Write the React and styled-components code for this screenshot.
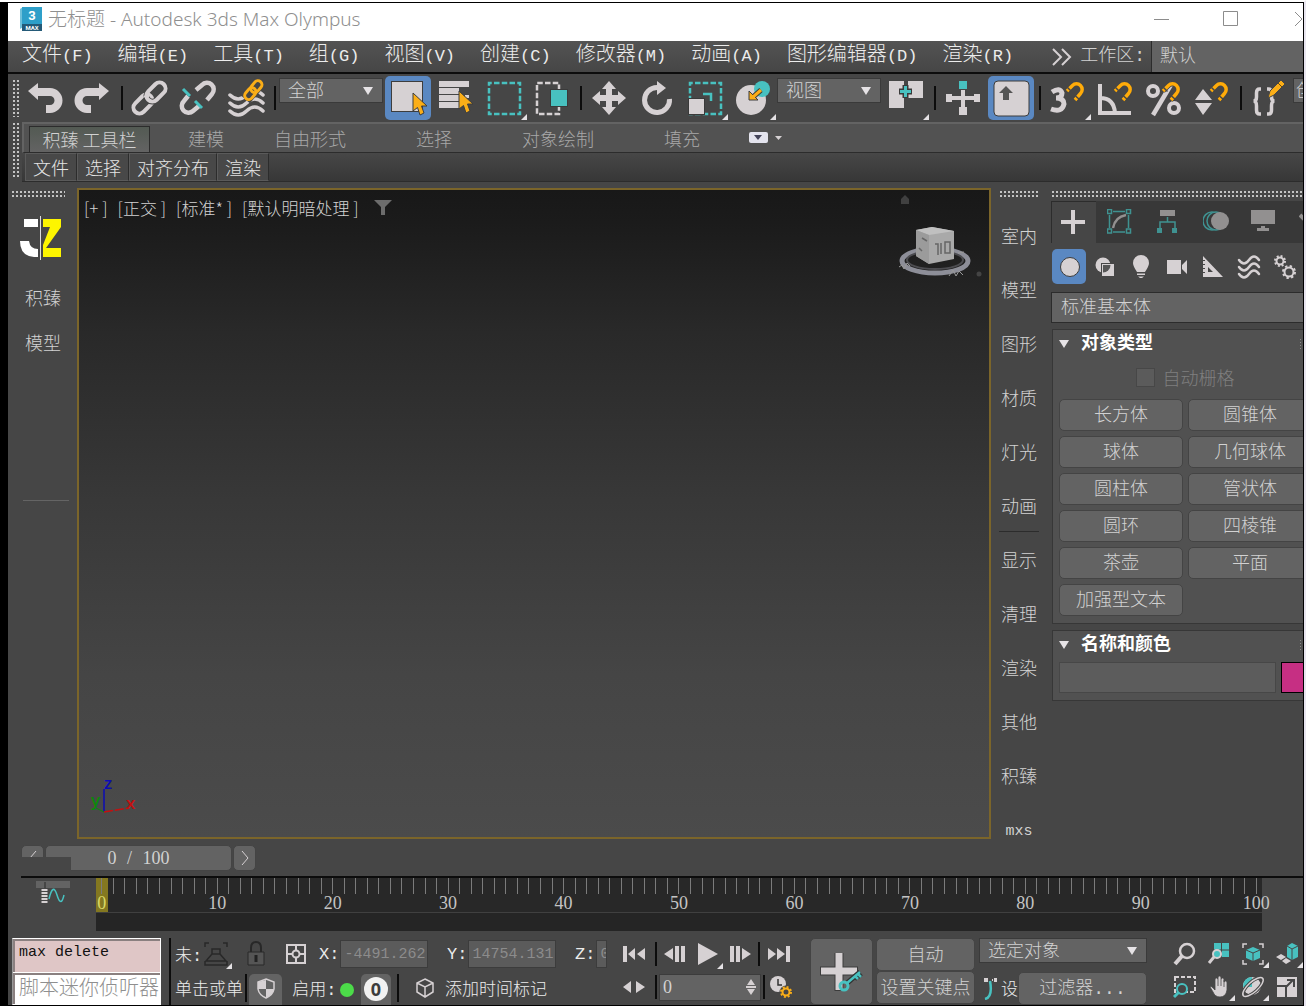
import React from "react";
import styled, { createGlobalStyle, css } from "styled-components";

const C = {
  base: "#464646",
  light: "#636363",
  panel: "#515151",
  dark: "#383838",
  line: "#2c2c2c",
  icon: "#d6d1d3",
  teal: "#48c1c0",
  gold: "#fbae17",
  blue: "#5a88c2",
  text: "#d2d2d2",
};
const song = '"Liberation Mono", "Noto Sans CJK SC", monospace';
const hei = '"Noto Sans CJK SC", "Noto Sans", sans-serif';
const digits = '"Liberation Serif", "Noto Sans CJK SC", serif';

const Global = createGlobalStyle`
  * { box-sizing: border-box; }
  body { margin: 0; background: #000; font-family: ${song}; font-weight: 300; }
  button, input, select { font: inherit; color: inherit; border: 0; margin: 0; padding: 0; background: none; border-radius: 0; }
  button { white-space: nowrap; }
  svg { display: block; flex: none; }
`;

/* ---------- frame ---------- */
const Frame = styled.div`
  display: flex;
  flex-direction: column;
  height: 100vh;
  min-height: 900px;
  overflow: hidden;
  padding-left: 8px;
  border-top: 2px solid #fff;
  border-right: 2px solid #e9e6f0;
  background: #000;
`;
const Window = styled.div`
  flex: 1;
  min-height: 0;
  display: flex;
  flex-direction: column;
  border: solid #000;
  border-width: 1px 1px 1px 0;
  background: ${C.base};
  color: ${C.text};
  overflow: hidden;
`;
const TitleBar = styled.header`
  flex: none;
  height: 38px;
  display: flex;
  align-items: center;
  padding: 0 0 7px 12px;
  gap: 6px;
  background: #fff;
  color: #8f8f8f;
  overflow: hidden;
`;
const Title = styled.h1`
  flex: 1;
  margin: 0;
  font: 300 19px/24px "Noto Sans", "Noto Sans CJK SC", sans-serif;
  white-space: nowrap;
`;
const WindowButtons = styled.div`
  flex: none;
  display: flex;
  margin-right: -31px;
`;
const WindowButton = styled.button`
  width: 69px;
  height: 30px;
  display: grid;
  place-items: center;
`;

/* ---------- menu ---------- */
const MenuBar = styled.nav`
  flex: none;
  height: 33px;
  display: flex;
  padding-left: 14px;
  background: linear-gradient(#535353, #464646);
  border-bottom: 2px solid #0c0c0c;
  overflow: hidden;
`;
const MenuList = styled.div`
  display: flex;
  gap: 25px;
`;
const MenuItem = styled.button`
  font-size: 20px;
  line-height: 26px;
  color: #ececec;
`;
const Latin = styled.span`
  font-size: 17px;
`;
const Workspace = styled.label`
  flex: 1;
  display: flex;
  align-items: center;
  justify-content: flex-end;
  font-size: 18px;
  line-height: 24px;
  white-space: nowrap;
  gap: 6px;
  & > span { padding: 0 0 2px 2px; }
`;
const WorkspaceSelect = styled.select`
  width: 152px;
  align-self: stretch;
  padding-left: 8px;
  background: ${C.light};
  border-left: 1px solid ${C.line};
  font-size: 18px;
  appearance: none;
`;

/* ---------- toolbar ---------- */
const ToolbarRow = styled.div`
  flex: none;
  height: 48px;
  display: flex;
  align-items: center;
  overflow: hidden;
  & > * { flex: none; }
`;
const dots = css`
  background-image: radial-gradient(circle, #c4c4c4 1px, transparent 1px);
  background-size: 4px 4px;
`;
const VGrip = styled.i`
  display: block;
  width: 8px;
  margin: 0 ${(p) => p.$after}px 0 4px;
  height: ${(p) => p.$h}px;
  ${dots}
`;
const HGrip = styled.i`
  display: block;
  height: 8px;
  ${dots}
`;
const ToolButton = styled.button`
  position: relative;
  width: 48px;
  height: 48px;
  display: grid;
  place-items: center;
  ${(p) =>
    p.$on &&
    css`
      &::before {
        content: "";
        position: absolute;
        inset: 2px 1px;
        border-radius: 5px;
        background: ${C.blue};
      }
    `}
  svg { position: relative; }
`;
const Fly = styled.i`
  position: absolute;
  right: ${(p) => p.$r || 1}px;
  bottom: ${(p) => p.$b || 2}px;
  border: solid transparent;
  border-width: 0 0 6px 6px;
  width: 0;
  height: 0;
  border-bottom-color: #e4e1e4;
`;
const Sep = styled.i`
  display: block;
  width: ${(p) => p.$w || 9}px;
  height: ${(p) => p.$h || 24}px;
  background: linear-gradient(#0c0c0c, #0c0c0c) center / 2px 100% no-repeat;
`;
const DropBox = styled.span`
  position: relative;
  display: block;
  width: ${(p) => p.$w}px;
  height: 25px;
  background: ${C.light};
  border: 1px solid #3a3a3a;
  align-self: flex-start;
  margin: ${(p) => (p.$bar ? "4px 1px 0 0" : "0")};
  svg {
    position: absolute;
    right: 9px;
    top: 8px;
    pointer-events: none;
  }
`;
const Drop = styled.select`
  width: 100%;
  height: 100%;
  padding: 2px 0 0 ${(p) => p.$inset}px;
  font-size: 18px;
  line-height: 22px;
  appearance: none;
`;

/* ---------- ribbon ---------- */
const Ribbon = styled.section`
  flex: none;
  display: flex;
  font-family: ${hei};
  font-size: 18px;
  overflow: hidden;
`;
const RibbonBody = styled.div`
  flex: 1;
  min-width: 0;
`;
const RibbonTabs = styled.div`
  height: 31px;
  display: flex;
  align-items: flex-end;
  padding-left: 5px;
  background: #525252;
  border-top: 2px solid ${C.light};
  border-bottom: 1px solid ${C.line};
  border-left: 2px solid ${C.light};
`;
const RibbonTab = styled.button`
  flex: none;
  width: ${(p) => p.$w}px;
  height: 28px;
  line-height: 24px;
  color: #a8a8a8;
  ${(p) =>
    p.$on &&
    css`
      height: 26px;
      margin-right: 14px;
      padding-bottom: 3px;
      color: ${C.text};
      background: linear-gradient(#535a53, #636363);
      border: 1px solid ${C.line};
      border-bottom: 0;
    `}
`;
const RibbonMore = styled.button`
  height: 28px;
  padding: 0 4px;
`;
const RibbonPanels = styled.div`
  height: 29px;
  display: flex;
  padding-left: 3px;
  background: linear-gradient(#474747, #373737);
  border-bottom: 1px solid ${C.line};
`;
const RibbonPanel = styled.button`
  padding: 0 7px;
  line-height: 27px;
  color: #e4e4e4;
  background: #484848;
  border: 1px solid #5a5a5a;
  border-right-color: ${C.line};
`;

/* ---------- work area ---------- */
const Work = styled.main`
  flex: 1;
  min-height: 0;
  display: flex;
  padding-top: 6px;
`;
const LeftDock = styled.aside`
  flex: none;
  width: 69px;
  padding: 2px 12px 0 3px;
  display: flex;
  flex-direction: column;
  align-items: stretch;
`;
const Logo = styled.div`
  height: 80px;
  display: grid;
  place-items: center;
  padding: 0 0 0 6px;
`;
const DockButton = styled.button`
  height: 45px;
  padding-left: 10px;
  font-size: 18px;
  line-height: 45px;
`;
const DockRule = styled.hr`
  width: 46px;
  margin: 132px 0 0 12px;
  border: 0;
  border-top: 1px solid #646464;
`;
const Viewport = styled.section`
  position: relative;
  flex: 1;
  min-width: 0;
  margin-bottom: 2px;
  border: 2px solid #7b652a;
  background: linear-gradient(#181818, #1b1b1b 5%, #292929 22%, #383838 48%, #454545 75%, #4b4b4b);
  overflow: hidden;
`;
const ViewLabels = styled.div`
  display: flex;
  align-items: center;
  gap: 10px;
  padding: 5px;
  font-family: ${hei};
  font-size: 17px;
  line-height: 26px;
`;
const Cube = styled.div`
  position: absolute;
  right: -2px;
  top: 2px;
`;
const Axis = styled.div`
  position: absolute;
  left: 8px;
  bottom: 18px;
`;
const SideDock = styled.aside`
  flex: none;
  width: 59px;
  padding: 2px 0 0 8px;
  overflow: hidden;
`;
const SideGrip = styled(HGrip)`
  width: 40px;
  margin-bottom: 10px;
`;
const SideButton = styled.button`
  display: block;
  width: 40px;
  height: 54px;
  padding-top: ${(p) => (p.$latin ? 6 : 0)}px;
  font-size: ${(p) => (p.$latin ? 15 : 18)}px;
  border-bottom: 1px solid ${(p) => (p.$rule ? C.line : "transparent")};
`;

/* ---------- command panel ---------- */
const Command = styled.aside`
  flex: none;
  width: 253px;
  padding: 2px 0 0 1px;
  overflow: hidden;
`;
const CommandTabs = styled.div`
  display: flex;
  height: 42px;
  margin-top: 3px;
  background: ${C.dark};
  button { flex: none; width: 48px; display: grid; place-items: center; }
  button:first-child { width: 45px; background: ${C.base}; border: solid ${C.line}; border-width: 1px 0 0 1px; }
`;
const Categories = styled.div`
  display: flex;
  gap: 2px;
  padding: 6px 0 8px 1px;
`;
const Category = styled.button`
  flex: none;
  width: 34px;
  height: 35px;
  display: grid;
  place-items: center;
  border-radius: 5px;
  background: ${(p) => (p.$on ? C.blue : "none")};
`;
const KindSelect = styled.select`
  display: block;
  width: 100%;
  height: 31px;
  padding-left: 9px;
  background: ${C.light};
  border: 1px solid ${C.line};
  border-right: 0;
  font-size: 18px;
  appearance: none;
`;
const Rollout = styled.section`
  margin: 6px 0 6px 1px;
  background: ${C.panel};
  border: 1px solid #373737;
  border-right: 0;
  padding: 0 0 7px 6px;
`;
const RolloutTitle = styled.h2`
  display: flex;
  align-items: center;
  gap: 12px;
  height: 27px;
  padding-top: 1px;
  margin: 0;
  font-size: 18px;
  line-height: 22px;
  font-weight: 700;
  color: #fff;
  i { width: 4px; height: 12px; margin-left: auto; ${dots} background-size: 3px 3px; opacity: 0.5; }
`;
const AutoGrid = styled.label`
  display: flex;
  align-items: center;
  justify-content: center;
  gap: 8px;
  height: 42px;
  padding-bottom: 2px;
  padding-left: 8px;
  font-size: 18px;
  color: #7f7f7f;
  input { appearance: none; width: 19px; height: 19px; background: #5b5b5b; border: 1px solid #474747; }
`;
const ObjectGrid = styled.div`
  display: grid;
  grid-template-columns: 124px 124px;
  gap: 5px;
`;
const Raised = styled.button`
  height: 32px;
  border: 1px solid #444;
  border-radius: 5px;
  background: ${C.light};
  font-size: 18px;
  line-height: 28px;
  overflow: hidden;
`;
const ObjectButton = styled(Raised)`
  padding-top: 2px;
`;
const NameRow = styled.div`
  display: flex;
  gap: 5px;
  padding-top: 4px;
  input { flex: 1; min-width: 0; height: 31px; background: #5c5c5c; border: 1px solid #474747; }
  button { width: 22px; height: 31px; background: #c62f83; border: 1px solid #000; border-right: 0; }
`;

/* ---------- time ---------- */
const TimeSlider = styled.div`
  position: relative;
  flex: none;
  height: 35px;
  display: flex;
  gap: 1px;
  padding: 4px 0 0 13px;
`;
const SliderStep = styled(Raised)`
  width: 23px;
  height: 26px;
  display: grid;
  place-items: center;
`;
const SliderThumb = styled(Raised)`
  width: 187px;
  height: 26px;
  font-family: ${digits};
  line-height: 22px;
`;
const Slash = styled.span`
  padding: 0 6px;
`;
const SliderMask = styled.i`
  position: absolute;
  left: 13px;
  top: 16px;
  width: 50px;
  height: 14px;
  background: ${C.base};
`;
const Track = styled.div`
  flex: none;
  height: 55px;
  display: flex;
  margin-left: 13px;
  padding-right: 41px;
  border-top: 2px solid #0c0c0c;
`;
const CurveButton = styled.button`
  flex: none;
  width: 75px;
  display: flex;
  padding: 2px 0 0 14px;
`;
const Ruler = styled.div`
  flex: 1;
  display: grid;
  grid-template-columns: repeat(101, minmax(0, 1fr));
  height: 53px;
  background: linear-gradient(#282828 34px, #404040 34px, #404040 35px, #252525 35px);
`;
const Tick = styled.div`
  display: flex;
  flex-direction: column;
  align-items: center;
  height: 34px;
  font: 18px/18px ${digits};
  color: ${(p) => (p.$now ? "#d9d968" : "#c4c4c4")};
  background: ${(p) => (p.$now ? "#847820" : "none")};
  &::before { content: ""; flex: none; width: 1px; height: 16px; background: #7c7c7c; }
`;

/* ---------- status ---------- */
const Status = styled.footer`
  flex: none;
  height: 74px;
  display: flex;
  padding: 7px 0 0 4px;
  overflow: hidden;
  & > * { flex: none; }
`;
const Listener = styled.div`
  width: 149px;
  display: grid;
  grid-template-rows: 33px 34px;
  gap: 1px;
  border: 1px solid #fff;
  border-left-color: #999;
  background: #fff;
  overflow: hidden;
  input {
    min-width: 0;
    padding: 0 0 9px 4px;
    background: #fff;
    border: 2px solid #8a8080;
    border-right-width: 0;
    border-bottom-width: 0;
    color: #8f8f8f;
    font-size: 20px;
  }
  input:first-child { background: #dfc6c6; color: #111; font-size: 15px; }
`;
const Stack = styled.div`
  display: flex;
  flex-direction: column;
  width: ${(p) => p.$w}px;
  margin-left: ${(p) => p.$ml || 0}px;
  ${(p) => p.$rule && "border-left: 2px solid #0c0c0c;"}
`;
const Line = styled.div`
  display: flex;
  align-items: center;
  height: ${(p) => p.$h || 34}px;
  padding-left: ${(p) => p.$pl || 0}px;
  & > * { flex: none; }
`;
const Clip = styled.span`
  width: ${(p) => p.$w}px;
  padding-top: 6px;
  overflow: hidden;
  white-space: nowrap;
  font-size: 17px;
  line-height: 26px;
  color: #ececec;
`;
const IconButton = styled.button`
  position: relative;
  width: ${(p) => p.$w}px;
  height: ${(p) => p.$h || 32}px;
  display: grid;
  place-items: center;
  ${(p) => p.$raised && `background: ${C.light}; border-radius: 5px 5px 0 0; margin-top: 3px;`}
`;
const Coord = styled.label`
  display: flex;
  align-items: center;
  width: 128px;
  padding-left: 10px;
  font-size: 17px;
  color: #ececec;
  input {
    width: ${(p) => p.$w}px;
    height: 28px;
    margin-left: 1px;
    padding-left: 3px;
    background: #5b5b5b;
    border: 1px solid #3c3c3c;
    font-size: 15px;
    color: #8c8c8c;
  }
`;
const Lamp = styled.i`
  width: 14px;
  height: 14px;
  margin: 4px 7px 0 4px;
  border-radius: 50%;
  background: #4cdb49;
`;
const Badge = styled.b`
  width: 24px;
  height: 24px;
  border-radius: 50%;
  background: #f1f1f1;
  color: #3c3c3c;
  font: 700 18px/24px "Open Sans", sans-serif;
`;
const FrameField = styled.span`
  display: flex;
  align-items: center;
  width: 102px;
  height: 27px;
  padding-right: 4px;
  background: ${C.light};
  border: 1px solid #3c3c3c;
  input { flex: 1; min-width: 0; padding-left: 3px; font: 18px ${digits}; }
`;
const BigKey = styled(Raised)`
  width: 63px;
  height: 70px;
  display: grid;
  place-items: center;
`;
const KeyButton = styled(Raised)`
  width: 99px;
  height: 33px;
  padding-top: 2px;
`;
const FilterButton = styled(Raised)`
  width: 129px;
  height: 33px;
  padding-top: 2px;
`;
const Nav = styled.div`
  display: grid;
  grid-template-columns: repeat(4, 34px);
  grid-auto-rows: 33px;
  margin-left: 22px;
`;

/* ---------- icons ---------- */
const Svg = ({ w = 48, h = w, children }) => (
  <svg width={w} height={h} viewBox={`0 0 ${w} ${h}`} fill="none" stroke="none" aria-hidden="true">
    {children}
  </svg>
);
const Down = ({ w = 10, h = 8, c = "#e6e3e6" }) => (
  <Svg w={w} h={h}><path d={`M0 0H${w}L${w / 2} ${h}Z`} fill={c} /></Svg>
);
const Magnet = () => (
  <g>
    <path d="M23 17L28 12a6 6 0 0 1 9 8L31 26" stroke={C.base} strokeWidth="5" />
    <path d="M23 17L28.500 11.500a5.500 5.500 0 0 1 8 8L31 26" stroke="#ffab09" strokeWidth="3.500" />
    <path d="M23.500 13.500l4 4M31.500 22l4 3.500" stroke={C.base} strokeWidth="1.500" />
  </g>
);
const Undo = () => (
  <>
    <path d="M15 18H29a8.500 8.500 0 0 1 0 17H25" stroke={C.icon} strokeWidth="8" />
    <path d="M7 17L17 9V26Z" fill={C.icon} />
  </>
);
const waves = (x, y, w, g) =>
  [0, 1, 2].map((i) => (
    <path key={i} d={`M${x} ${y + i * g}q${w / 4} ${g} ${w / 2} 0t${w / 2} 0`} stroke={C.icon} strokeWidth={w > 25 ? 3.5 : 2.5} strokeLinecap="round" />
  ));
const DashRect = ({ c = C.teal, x, y, w, h }) => (
  <rect x={x} y={y} width={w} height={h} stroke={c} strokeWidth="2.500" strokeDasharray="5.500 2.250" strokeDashoffset="2.750" />
);
const Pointer = ({ x, y }) => (
  <path transform={`translate(${x} ${y})`} d="M0 0V18L4.500 14.500L7 22L11 20L8.500 13H14Z" fill={C.gold} stroke="#3d3d3d" />
);

const art = {
  undo: <Undo />,
  redo: <g transform="translate(47 0) scale(-1 1)"><Undo /></g>,
  link: (
    <g stroke={C.icon} strokeWidth="4">
      <rect x="-11" y="-6" width="22" height="12" rx="6" transform="translate(17 30) rotate(-45)" />
      <rect x="-11" y="-6" width="22" height="12" rx="6" transform="translate(30 18) rotate(-45)" stroke={C.base} strokeWidth="6" />
      <rect x="-11" y="-6" width="22" height="12" rx="6" transform="translate(30 18) rotate(-45)" />
      <path d="M19 24L24 19" />
    </g>
  ),
  unlink: (
    <>
      <path d="M22 16L28 11a6.500 6.500 0 0 1 10 9L33 26M14 22L10 27a6.500 6.500 0 0 0 9 10L25 32" stroke={C.icon} strokeWidth="4.500" />
      <path d="M9 15L16 22M21 27L28 34" stroke={C.teal} strokeWidth="3" />
    </>
  ),
  warp: (
    <>
      {waves(8, 21, 33, 8)}
      <path d="M23 25L38 8" stroke={C.base} strokeWidth="13" />
      <g stroke={C.gold} strokeWidth="3">
        <rect x="-6" y="-4" width="13" height="8" rx="4" transform="translate(34 13) rotate(-50)" />
        <rect x="-6" y="-4" width="13" height="8" rx="4" transform="translate(28 20) rotate(-50)" />
      </g>
    </>
  ),
  select: (
    <>
      <rect x="7.500" y="7.500" width="31" height="30" fill={C.icon} stroke="#3d3d3d" />
      <Pointer x={29} y={19} />
    </>
  ),
  list: (
    <>
      <path d="M7 7H37V13H7ZM7 14H27V20H7ZM7 21H27V27H7ZM33 21H37V24H33ZM7 28H27V34H7Z" fill={C.icon} />
      <Pointer x={27} y={17} />
    </>
  ),
  rect: <DashRect x={9} y={9} w={31} h={31} />,
  window: (
    <>
      <path d="M31 16V9H9V40H31V32" stroke={C.icon} strokeWidth="2.500" strokeDasharray="5.500 2.250" />
      <rect x="22.500" y="15.500" width="17" height="17" fill={C.teal} stroke="#3a3a3a" />
    </>
  ),
  move: <path d="M24 7L31 15H27V21H33V17L41 24L33 31V27H27V33H31L24 41L17 33H21V27H15V31L7 24L15 17V21H21V15H17Z" fill={C.icon} />,
  rotate: (
    <>
      <path d="M36.500 25a12.500 12.500 0 1 1-12.500-11.500" stroke={C.icon} strokeWidth="5" />
      <path d="M24 7L33 14L24 21Z" fill={C.icon} />
    </>
  ),
  scale: (
    <>
      <DashRect x={9} y={9} w={31} h={31} />
      <path d="M22 20H30V27" stroke={C.teal} strokeWidth="2.500" />
      <rect x="7.500" y="24.500" width="16" height="16" fill={C.icon} stroke="#3a3a3a" />
    </>
  ),
  place: (
    <>
      <circle cx="22" cy="26" r="15" fill={C.icon} />
      <circle cx="33" cy="15" r="8" fill={C.teal} />
      <path d="M32 16L24 23" stroke="#3d3d3d" strokeWidth="5" />
      <path d="M20 26V17L29 26Z" fill={C.gold} stroke="#3d3d3d" />
      <path d="M32 16L24 23" stroke={C.gold} strokeWidth="3" />
    </>
  ),
  pivot: (
    <>
      <path d="M7 7H22V34H7ZM26 7H41V24H26Z" fill={C.icon} />
      <path d="M17 17.500H30M23.500 11V24" stroke="#3a3a3a" strokeWidth="6" />
      <path d="M18 17.500H29M23.500 12V23" stroke={C.teal} strokeWidth="3" />
    </>
  ),
  manip: (
    <>
      <path d="M24 16V36M12 24H36" stroke={C.icon} strokeWidth="4" />
      <path d="M7 20H13V28H7ZM35 20H41V28H35ZM20 33H28V41H20Z" fill={C.icon} />
      <rect x="20" y="7" width="8" height="8" fill={C.teal} />
    </>
  ),
  keys: (
    <>
      <rect x="7" y="7" width="35" height="35" rx="4" fill={C.icon} stroke="#3d3d3d" />
      <path d="M19 12L26 19H22V26H16V19H12Z" fill="#555" />
    </>
  ),
  snap: (
    <>
      <path d="M8 18q8-5 10 1q0 5-6 5q8 0 8 6q-2 9-13 5" stroke={C.icon} strokeWidth="5" />
      <Magnet />
    </>
  ),
  angle: (
    <>
      <path d="M8 10V39H39M8 24q14 0 15 15" stroke={C.icon} strokeWidth="4" />
      <Magnet />
    </>
  ),
  percent: (
    <>
      <circle cx="13" cy="17" r="5" stroke={C.icon} strokeWidth="4" />
      <circle cx="34" cy="34" r="5" stroke={C.icon} strokeWidth="4" />
      <path d="M32 9L13 41" stroke={C.icon} strokeWidth="4.500" />
      <Magnet />
    </>
  ),
  spin: (
    <>
      <path d="M7 26L15 15L24 26ZM7 29H24L15 41Z" fill={C.icon} />
      <Magnet />
    </>
  ),
  script: (
    <>
      <path d="M16 15h-1.500q-3 0-3 4v4q0 4-3 4q3 0 3 5v4q0 4 3 4H16M22 15h1.500q3 0 3 4v4q0 4 3 4q-3 0-3 5v4q0 4-3 4H22" stroke={C.icon} strokeWidth="3.500" />
      <path d="M23 24L25 17L36 6L40 10L29 21Z" fill={C.gold} stroke={C.base} />
      <path d="M33 9L37 13" stroke="#6a4a10" />
    </>
  ),
};
const Tool = ({ icon, label, on, fly }) => (
  <ToolButton type="button" aria-label={label} $on={on}>
    <Svg>{art[icon]}</Svg>
    {fly && <Fly />}
  </ToolButton>
);

const SelectBox = ({ label, value, w, bar, inset = 8 }) => (
  <DropBox $w={w} $bar={bar}>
    <Drop aria-label={label} defaultValue={value} $inset={inset}><option>{value}</option></Drop>
    <Down />
  </DropBox>
);

const menus = [["文件", "F"], ["编辑", "E"], ["工具", "T"], ["组", "G"], ["视图", "V"], ["创建", "C"], ["修改器", "M"], ["动画", "A"], ["图形编辑器", "D"], ["渲染", "R"]];
const sides = ["室内", "模型", "图形", "材质", "灯光", "动画", "显示", "清理", "渲染", "其他", "积臻", "mxs"];
const objects = ["长方体", "圆锥体", "球体", "几何球体", "圆柱体", "管状体", "圆环", "四棱锥", "茶壶", "平面", "加强型文本"];

const commandTabs = [
  ["创建", <path key="a" d="M12 0V24M0 12H24" stroke={C.icon} strokeWidth="4" />],
  ["修改", <g key="b" strokeWidth="1.500"><path d="M6 2.500H18M6 23H18M2.500 6V19M21.500 6V19M0.500 0.500h4v4h-4zM19.500 0.500h4v4h-4zM0.500 20h4v4h-4zM19.500 20h4v4h-4z" stroke="#3f9291" /><path d="M6 19Q8 8 19 6" stroke="#929090" strokeWidth="2.500" /></g>],
  ["层次", <g key="c"><path d="M5 1H20V7H5Z" fill="#929090" /><path d="M12.500 8V13M5 19V13H20V19" stroke="#3f9291" strokeWidth="1.500" /><path d="M2 19H7V24H2ZM17 19H22V24H17Z" fill="#3f9291" /></g>],
  ["运动", <g key="d"><circle cx="9" cy="12" r="9" stroke="#3f9291" strokeWidth="1.500" /><circle cx="13" cy="12" r="9" stroke="#3f9291" strokeWidth="1.500" fill={C.dark} /><circle cx="17" cy="12" r="9" fill="#929090" /></g>],
  ["显示", <path key="e" d="M0 1H24V15H0ZM10 17H14V19H18V22H6V19H10Z" fill="#929090" />],
  ["实用程序", <path key="f" d="M1 6L11 16L13 14" stroke="#929090" strokeWidth="4" />],
];
const gear = (x, y, r, c) => (
  <g stroke={c}>
    <circle cx={x} cy={y} r={r} strokeWidth="2" />
    <circle cx={x} cy={y} r={r + 1.5} strokeWidth="2" strokeDasharray={`${(r + 1.5) * 0.39} ${(r + 1.5) * 0.395}`} />
  </g>
);
const categories = [
  ["几何体", <circle key="a" cx="13" cy="12" r="9.500" fill={C.icon} stroke="#3d3d3d" />],
  ["图形", <g key="b"><circle cx="10" cy="10" r="7.500" fill={C.icon} /><rect x="8.500" y="8.500" width="13" height="13" fill={C.icon} stroke="#464646" /><path d="M10 10H17.500A7.500 7.500 0 0 1 10 17.500Z" fill="#565656" /></g>],
  ["灯光", <path key="c" d="M12 0a8 8 0 0 1 8 8q0 3-4 9H8Q4 11 4 8a8 8 0 0 1 8-8ZM8 18.500H16V20H8ZM9 21.500H15L13 23H11Z" fill={C.icon} />],
  ["摄影机", <path key="d" d="M2 5H16V19H2ZM17 10L22 5V19L17 14Z" fill={C.icon} />],
  ["辅助对象", <path key="e" fillRule="evenodd" d="M2 1L22 22H2ZM7 12V17H12ZM2 5H4V6H2ZM2 9H4V10H2ZM2 13H4V14H2ZM2 17H4V18H2Z" fill={C.icon} />],
  ["空间扭曲", <g key="f">{waves(2, 5, 20, 7)}</g>],
  ["系统", <g key="g">{gear(7, 6, 3.5, C.icon)}{gear(16, 17, 4.5, C.icon)}</g>],
];
const tri = (d, c = C.icon) => <path d={d} fill={c} />;
const navIcons = [
  ["缩放", <g key="a"><circle cx="14" cy="9" r="7" stroke={C.icon} strokeWidth="2.500" /><path d="M9 14L2 22" stroke={C.icon} strokeWidth="4" /></g>],
  ["缩放所有视图", <g key="b"><path d="M7 1H22V15H7Z" fill={C.teal} /><path d="M14.500 1V15M7 8H22" stroke={C.base} /><circle cx="10" cy="12" r="4" fill={C.teal} stroke={C.icon} strokeWidth="2" /><path d="M7 15L2 21" stroke={C.icon} strokeWidth="3" /></g>],
  ["最大化显示", <g key="c"><path d="M2 6V2H6M18 2H22V6M22 18V22H18M6 22H2V18" stroke={C.icon} strokeWidth="1.500" /><path d="M12 5L19 8V16L12 19L5 16V8Z" fill={C.teal} /><path d="M5 8L12 11L19 8M12 11V19" stroke={C.base} /></g>, 1],
  ["所有视图最大化", <g key="d"><path d="M12 4L17 1L23 4V15L17 18L12 15Z" fill={C.teal} /><path d="M12 4L17 7L23 4M17 7V18" stroke={C.base} /><path d="M1 15L6 12L11 15L6 18ZM7 19L11 16L16 19L11 22Z" fill={C.icon} /></g>, 1],
  ["缩放区域", <g key="e"><rect x="2" y="2" width="20" height="15" stroke={C.icon} strokeWidth="2" strokeDasharray="4 2" /><circle cx="9" cy="14" r="5" fill={C.base} stroke={C.teal} strokeWidth="2" /><path d="M6 17L1 22" stroke={C.teal} strokeWidth="3" /></g>],
  ["平移", <path key="f" d="M8 13V4q1.500-2 3 0V2q1.500-2 3 0V4q1.500-2 3 0V7q1.500-2 3 0V15q-1 7-7 7q-5 0-7-5L3 12q1-2 5 3ZM11 4V11M14 4V11M17 5V12" fill={C.icon} stroke={C.base} strokeWidth="0.800" />, 1],
  ["环绕", <g key="g"><circle cx="11" cy="11" r="9" fill={C.icon} /><path d="M11 12V2A9 9 0 0 0 2 12Z" fill={C.teal} /><ellipse cx="12" cy="12" rx="13" ry="5" transform="rotate(-42 12 12)" stroke={C.base} strokeWidth="3.500" /><ellipse cx="12" cy="12" rx="13" ry="5" transform="rotate(-42 12 12)" stroke={C.icon} strokeWidth="1.500" /></g>, 1],
  ["最大化视口", <g key="h"><path d="M2 2H22V22H2Z" fill={C.icon} /><path d="M2 11H11V22" stroke={C.base} strokeWidth="2" /><path d="M11 12L18 5M12 5H19V12" stroke={C.base} strokeWidth="2" /></g>],
];

export default function App() {
  return (
    <Frame>
      <Global />
      <Window>
        <TitleBar>
          <Svg w={22} h={24}>
            <path d="M0 2L3 0V20L0 22Z" fill="#6fc0da" />
            <path d="M2 0H22V17H2Z" fill="#2e9fc9" />
            <path d="M2 17H22V24H2Z" fill="#245a78" />
            <text x="12" y="13" fill="#fff" textAnchor="middle" fontFamily="Roboto, sans-serif" fontWeight="700" fontSize="13">3</text>
            <text x="12" y="23" fill="#fff" textAnchor="middle" fontFamily="Roboto, sans-serif" fontWeight="700" fontSize="6">MAX</text>
          </Svg>
          <Title>无标题 - Autodesk 3ds Max Olympus</Title>
          <WindowButtons>
            <WindowButton type="button" aria-label="最小化"><Svg w={16}><path d="M0 8.500H15" stroke="#8c8c8c" /></Svg></WindowButton>
            <WindowButton type="button" aria-label="最大化"><Svg w={16}><path d="M.5 .5H14.500V14.500H.5Z" stroke="#8c8c8c" /></Svg></WindowButton>
            <WindowButton type="button" aria-label="关闭"><Svg w={16}><path d="M3 1L10 8L3 15" stroke="#8c8c8c" /></Svg></WindowButton>
          </WindowButtons>
        </TitleBar>

        <MenuBar>
          <MenuList>
            {menus.map(([name, key]) => (
              <MenuItem type="button" key={name}>{name}<Latin>({key})</Latin></MenuItem>
            ))}
          </MenuList>
          <Workspace>
            <Svg w={20} h={18}><path d="M1 1L9 9L1 17M10 1L18 9L10 17" stroke={C.icon} strokeWidth="2" /></Svg>
            <span>工作区:</span>
            <WorkspaceSelect defaultValue="默认"><option>默认</option></WorkspaceSelect>
          </Workspace>
        </MenuBar>

        <ToolbarRow>
          <VGrip $h={38} $after={1} />
          <Tool icon="undo" label="撤消" />
          <Tool icon="redo" label="重做" />
          <Sep />
          <Tool icon="link" label="链接" />
          <Tool icon="unlink" label="取消链接" />
          <Tool icon="warp" label="绑定到空间扭曲" />
          <Sep />
          <SelectBox label="选择过滤器" value="全部" w={104} bar />
          <Tool icon="select" label="选择对象" on />
          <Tool icon="list" label="按名称选择" />
          <Tool icon="rect" label="矩形选择区域" fly />
          <Tool icon="window" label="窗口/交叉" />
          <Sep />
          <Tool icon="move" label="移动" />
          <Tool icon="rotate" label="旋转" />
          <Tool icon="scale" label="缩放" fly />
          <Tool icon="place" label="放置" fly />
          <SelectBox label="参考坐标系" value="视图" w={104} bar />
          <Tool icon="pivot" label="使用轴点中心" fly />
          <Sep />
          <Tool icon="manip" label="操纵" />
          <Tool icon="keys" label="键盘快捷键覆盖" on />
          <Sep />
          <Tool icon="snap" label="捕捉开关" fly />
          <Tool icon="angle" label="角度捕捉" />
          <Tool icon="percent" label="百分比捕捉" />
          <Tool icon="spin" label="微调器捕捉" />
          <Sep />
          <Tool icon="script" label="编辑命名选择集" />
          <SelectBox label="命名选择集" value="创建选择集" w={140} bar inset={2} />
        </ToolbarRow>

        <Ribbon>
          <VGrip $h={56} $after={2} />
          <RibbonBody>
            <RibbonTabs>
              <RibbonTab type="button" $w={121} $on>积臻 工具栏</RibbonTab>
              <RibbonTab type="button" $w={84}>建模</RibbonTab>
              {["自由形式", "选择", "对象绘制", "填充"].map((t) => (
                <RibbonTab type="button" $w={124} key={t}>{t}</RibbonTab>
              ))}
              <RibbonMore type="button" aria-label="更多">
                <Svg w={36} h={12}>
                  <rect x="1" y="0" width="19" height="11" rx="2" fill="#e4e4ee" />
                  <path d="M6 3H14L10 8Z" fill="#44445a" />
                  <path d="M27 4H34L30.500 8Z" fill={C.icon} />
                </Svg>
              </RibbonMore>
            </RibbonTabs>
            <RibbonPanels>
              {["文件", "选择", "对齐分布", "渲染"].map((t) => <RibbonPanel type="button" key={t}>{t}</RibbonPanel>)}
            </RibbonPanels>
          </RibbonBody>
        </Ribbon>

        <Work>
          <LeftDock>
            <HGrip />
            <Logo>
              <Svg w={42} h={44}>
                <path d="M4 3H18V11H4ZM0 25H9Q10 33 18 33V41H14Q0 40 0 25Z" fill="#fff" />
                <path d="M20.500 0V44" stroke="#ddd" />
                <path d="M23 3H41V11L26 32H41V41H23V29L30 11H23Z" fill="#fdf500" />
              </Svg>
            </Logo>
            <DockButton type="button">积臻</DockButton>
            <DockButton type="button">模型</DockButton>
            <DockRule />
          </LeftDock>

          <Viewport>
            <ViewLabels>
              <button type="button">[+ ]</button>
              <button type="button">[正交 ]</button>
              <button type="button">[标准* ]</button>
              <button type="button">[默认明暗处理 ]</button>
              <Svg w={30} h={18}><path d="M5 1H23L16 8V16H12V8Z" fill="#6c6c6c" /></Svg>
            </ViewLabels>
            <Cube>
              <Svg w={92} h={88}>
                <path d="M2 7L6 3L10 7V12H2Z" fill="#404040" />
                <ellipse cx="36" cy="69" rx="33" ry="12" stroke="#8d8e98" strokeWidth="5" />
                <ellipse cx="36" cy="68" rx="28" ry="9" stroke="#4c4c50" strokeWidth="2" />
                <path d="M17 38L33 35L55 39V67L30 72L17 64Z" fill="#a9a9a9" />
                <path d="M17 38L30 43L55 39L33 35Z" fill="#c0c0c0" />
                <path d="M30 43V72L17 64V38Z" fill="#9b9b9b" />
                <path d="M36 52h3v11M42 51v11M46 50h5v11h-5zM23 46l5 3M20 56l3 3" stroke="#666" strokeWidth="1.500" />
                <path d="M0 75l3-2l2 4l3-6l3 3M50 84l4-6l3 6l3-5l4 4M59 61l6-1" stroke="#999" />
                <circle cx="80" cy="82" r="2.500" fill="#444" />
              </Svg>
            </Cube>
            <Axis>
              <Svg w={54} h={48}>
                <path d="M17 18V41" stroke="#0c0cb4" strokeWidth="1.500" />
                <path d="M17 41L42 37" stroke="#c41010" strokeWidth="1.500" strokeDasharray="9 2" />
                <path d="M17 41L9 37" stroke="#0a8a0a" />
                <g fontFamily="Open Sans, sans-serif" fontSize="17" fontWeight="600">
                  <text x="17" y="18" fill="#0c0cb4">z</text>
                  <text x="4" y="35" fill="#0a8a0a">y</text>
                  <text x="39" y="38" fill="#c41010">x</text>
                </g>
              </Svg>
            </Axis>
          </Viewport>

          <SideDock>
            <SideGrip />
            {sides.map((s) => (
              <SideButton type="button" key={s} $latin={s === "mxs"} $rule={s === "动画"}>{s}</SideButton>
            ))}
          </SideDock>

          <Command>
            <HGrip />
            <CommandTabs>
              {commandTabs.map(([name, icon]) => (
                <button type="button" aria-label={name} key={name}><Svg w={26}>{icon}</Svg></button>
              ))}
            </CommandTabs>
            <Categories>
              {categories.map(([name, icon], i) => (
                <Category type="button" aria-label={name} key={name} $on={i === 0}><Svg w={24}>{icon}</Svg></Category>
              ))}
            </Categories>
            <KindSelect aria-label="对象类别" defaultValue="标准基本体"><option>标准基本体</option></KindSelect>
            <Rollout>
              <RolloutTitle><Down />对象类型<i /></RolloutTitle>
              <AutoGrid><input type="checkbox" disabled />自动栅格</AutoGrid>
              <ObjectGrid>
                {objects.map((o) => <ObjectButton type="button" key={o}>{o}</ObjectButton>)}
              </ObjectGrid>
            </Rollout>
            <Rollout>
              <RolloutTitle><Down />名称和颜色<i /></RolloutTitle>
              <NameRow>
                <input type="text" aria-label="名称" />
                <button type="button" aria-label="颜色" />
              </NameRow>
            </Rollout>
          </Command>
        </Work>

        <TimeSlider>
          <SliderStep type="button" aria-label="上一帧"><Svg w={8} h={16}><path d="M7 1L1 8L7 15" stroke={C.icon} /></Svg></SliderStep>
          <SliderThumb type="button">0 <Slash>/</Slash> 100</SliderThumb>
          <SliderStep type="button" aria-label="下一帧"><Svg w={8} h={16}><path d="M1 1L7 8L1 15" stroke={C.icon} /></Svg></SliderStep>
          <SliderMask />
        </TimeSlider>

        <Track>
          <CurveButton type="button" aria-label="迷你曲线编辑器">
            <Svg w={36} h={28}>
              <path d="M1 1H35V8H1Z" fill={C.light} />
              <path d="M10 2V8" stroke={C.base} strokeWidth="2" />
              <path d="M9.500 9V23" stroke={C.icon} strokeWidth="6" strokeDasharray="2 1" />
              <path d="M14 19Q18 2 22 15T29 15" stroke={C.teal} strokeWidth="1.500" />
            </Svg>
          </CurveButton>
          <Ruler>
            {Array.from({ length: 101 }, (_, i) => (
              <Tick key={i} $now={i === 0}>{i % 10 === 0 && <span>{i}</span>}</Tick>
            ))}
          </Ruler>
        </Track>

        <Status>
          <Listener>
            <input aria-label="宏录制器" defaultValue="max delete" />
            <input aria-label="脚本侦听器" defaultValue="脚本迷你侦听器" />
          </Listener>
          <Stack $w={445} $ml={8} $rule>
            <Line $h={34} $pl={4}>
              <Clip $w={28}>未:</Clip>
              <IconButton type="button" aria-label="选择锁定范围" $w={26}>
                <Svg w={26}>
                  <path d="M2 6V2H6M20 2H24V6M9 8H17V13H9ZM9 13L3 20H23L17 13M2 20V24H24V20" stroke="#282828" strokeWidth="1.500" />
                </Svg>
                <Fly $r={-3} $b={1} />
              </IconButton>
              <IconButton type="button" aria-label="锁定" $w={54}>
                <Svg w={20} h={26}>
                  <path d="M5 11V7Q5 1 10 1T15 7V11" stroke="#282828" strokeWidth="2" />
                  <path d="M2 11H18V24H2Z" fill="#555" stroke="#282828" />
                  <path d="M10 14V21" stroke="#222" strokeWidth="3" />
                </Svg>
              </IconButton>
              <IconButton type="button" aria-label="绝对模式" $w={26}>
                <Svg w={22}>
                  <path d="M2 2H20V20H2ZM11 2V7M11 15V20M2 11H7M15 11H20" stroke={C.icon} strokeWidth="2" />
                  <circle cx="11" cy="11" r="3.500" stroke={C.icon} strokeWidth="2" />
                </Svg>
              </IconButton>
              <Coord $w={88}>X:<input defaultValue="-4491.262" /></Coord>
              <Coord $w={88}>Y:<input defaultValue="14754.131" /></Coord>
              <Coord $w={11}>Z:<input defaultValue="0" /></Coord>
            </Line>
            <Line $h={40} $pl={4}>
              <Clip $w={68}>单击或单</Clip>
              <Sep $w={6} $h={28} />
              <IconButton type="button" aria-label="安全" $w={33} $h={31} $raised>
                <Svg w={20} h={22}>
                  <path d="M10 1L18 4V11Q17 17 10 20Q3 17 2 11V4Z" fill={C.light} stroke={C.icon} strokeWidth="1.500" />
                  <path d="M10 2V11H2V4ZM10 11H18Q17 17 10 20Z" fill={C.icon} />
                </Svg>
              </IconButton>
              <Clip $w={54}>&nbsp;启用:</Clip>
              <Lamp />
              <IconButton type="button" aria-label="通知" $w={30} $h={31} $raised><Badge>0</Badge></IconButton>
              <Sep $w={14} $h={28} />
              <IconButton type="button" aria-label="时间标记" $w={40}>
                <Svg w={20} h={22}><path d="M10 2L18 6V15L10 20L2 15V6ZM2 6L10 10L18 6M10 10V20" stroke={C.icon} strokeWidth="1.500" /></Svg>
              </IconButton>
              <Clip $w={104}>添加时间标记</Clip>
            </Line>
          </Stack>
          <Stack $w={187} $ml={1}>
            <Line $h={32}>
              <IconButton type="button" aria-label="转至开头" $w={38}><Svg w={24} h={20}><path d="M1 2H5V18H1ZM6 10L13 4V16ZM15 10L23 4V16Z" fill={C.icon} /></Svg></IconButton>
              <Sep $w={6} />
              <IconButton type="button" aria-label="上一帧" $w={32}><Svg w={22} h={20}>{tri("M0 10L9 4V16ZM11 2H15V18H11ZM17 2H21V18H17Z")}</Svg></IconButton>
              <IconButton type="button" aria-label="播放" $w={33}><Svg w={22} h={24}>{tri("M1 1L21 12L1 23Z")}</Svg><Fly $r={1} $b={1} /></IconButton>
              <IconButton type="button" aria-label="下一帧" $w={32}><Svg w={22} h={20}>{tri("M1 2H5V18H1ZM7 2H11V18H7ZM13 4L22 10L13 16Z")}</Svg></IconButton>
              <Sep $w={6} />
              <IconButton type="button" aria-label="转至结尾" $w={34}><Svg w={24} h={20}>{tri("M1 4L9 10L1 16ZM10 4L18 10L10 16ZM19 2H23V18H19Z")}</Svg></IconButton>
            </Line>
            <Line $h={34}>
              <IconButton type="button" aria-label="关键点模式" $w={38}><Svg w={24} h={14}>{tri("M1 7L9 1V13ZM23 7L14 1V13Z")}</Svg></IconButton>
              <Sep $w={6} />
              <FrameField>
                <input aria-label="当前帧" defaultValue="0" />
                <Svg w={10} h={16}>{tri("M1 6L5 0L9 6ZM0 7H10V9H0ZM1 10H9L5 16Z")}</Svg>
              </FrameField>
              <Sep $w={6} />
              <IconButton type="button" aria-label="时间配置" $w={28}>
                <Svg w={24}>
                  <circle cx="9" cy="9" r="8" fill={C.icon} />
                  <path d="M9 4V10H13" stroke="#333" strokeWidth="1.500" />
                  <circle cx="17" cy="17" r="6.500" fill={C.base} />
                  {gear(17, 17, 3.5, C.gold)}
                </Svg>
              </IconButton>
            </Line>
          </Stack>
          <Stack $w={66} $ml={8}>
            <BigKey type="button" aria-label="设置关键点">
              <Svg w={46}>
                <path d="M20 4V42M1 22H39" stroke="#3c3c3c" strokeWidth="9" />
                <path d="M20 4V41M2 22H38" stroke={C.icon} strokeWidth="7" />
                <path d="M27 35L41 23M36 27L39 30M39 25L42 28" stroke="#333" strokeWidth="5" />
                <circle cx="25" cy="37" r="4" stroke={C.teal} strokeWidth="3" />
                <path d="M27 35L41 23M36 27L39 30M39 25L42 28" stroke={C.teal} strokeWidth="2.500" />
              </Svg>
            </BigKey>
          </Stack>
          <Stack $w={103}>
            <KeyButton type="button">自动</KeyButton>
            <KeyButton type="button">设置关键点</KeyButton>
          </Stack>
          <Stack $w={167}>
            <Line $h={33}><SelectBox label="选定对象" value="选定对象" w={168} /></Line>
            <Line $pl={2}>
              <IconButton type="button" aria-label="新建关键点切线" $w={20}>
                <Svg w={16} h={24}>
                  <path d="M2 23Q10 21 7 5" stroke={C.teal} strokeWidth="2.500" />
                  <path d="M1 2H5V6H1ZM9 3H10V5H9ZM11 2H14V6H11Z" fill={C.icon} />
                </Svg>
              </IconButton>
              <Clip $w={17}>设</Clip>
              <FilterButton type="button">过滤器...</FilterButton>
            </Line>
          </Stack>
          <Nav>
            {navIcons.map(([name, icon, fly]) => (
              <IconButton type="button" aria-label={name} key={name} $w={34}>
                <Svg w={24}>{icon}</Svg>
                {fly && <Fly />}
              </IconButton>
            ))}
          </Nav>
        </Status>
      </Window>
    </Frame>
  );
}
